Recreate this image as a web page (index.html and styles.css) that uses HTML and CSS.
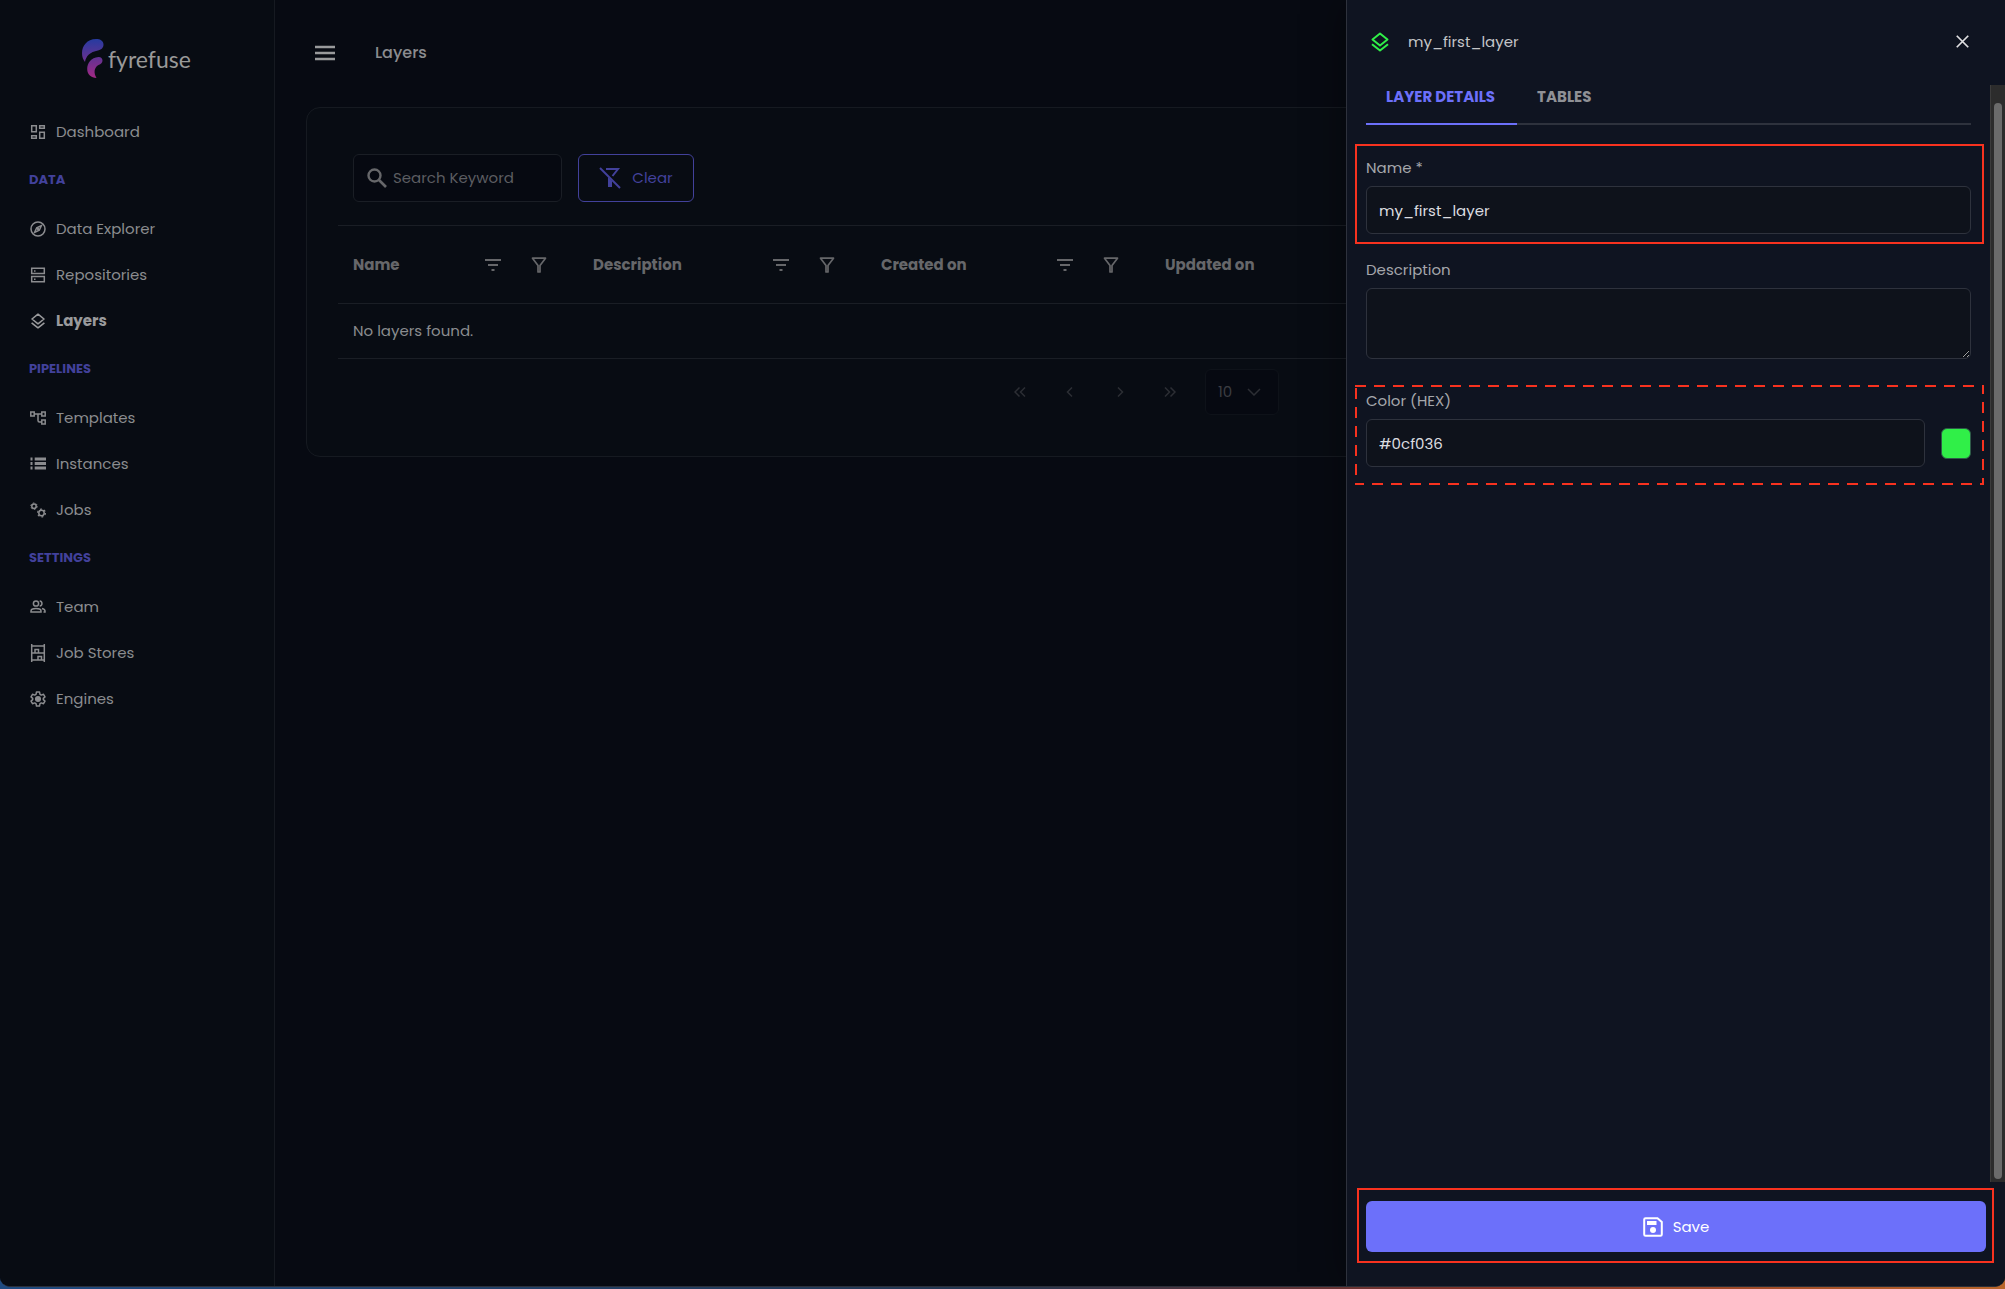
FILE: index.html
```html
<!DOCTYPE html>
<html lang="en">
<head>
    <meta charset="UTF-8">
    <meta name="viewport" content="width=device-width, initial-scale=1.0">
    <title>Layers - fyrefuse</title>
    <link rel="stylesheet" href="styles.css">
</head>
<body>

    <!-- Shared icons -->
    <svg class="sprite" aria-hidden="true">
        <symbol id="i-sort" viewBox="0 0 18 14">
            <path d="M1 2h16M4 7h10M7.500 12h3" fill="none" stroke="currentColor" stroke-width="2"/>
        </symbol>
        <symbol id="i-filter" viewBox="0 0 16 16">
            <path d="M1.500 1.200h13L9 8.500V15H7V8.500z" fill="none" stroke="currentColor" stroke-width="1.700" stroke-linejoin="round"/>
        </symbol>
        <symbol id="i-layers" viewBox="0 0 18 20">
            <path d="M9 1.500L16.500 7.500 9 13.500 1.500 7.500zM1 12.200L9 18.500 17 12.200" fill="none" stroke="currentColor" stroke-width="2" stroke-linejoin="round"/>
        </symbol>
    </svg>

    <div class="app">
        <aside class="sidebar">
            <a class="logo" href="#">
                <svg width="22" height="40" viewBox="0 0 22 40">
                    <defs>
                        <linearGradient id="flame" x1="0" y1="0" x2="0" y2="1">
                            <stop offset="0" stop-color="#263ba0"/>
                            <stop offset="1" stop-color="#a52883"/>
                        </linearGradient>
                    </defs>
                    <mask id="mark">
                        <path fill="#fff" d="M14 0C5 0 0 7 0 14c0 4 1 6.500 3 9 1-6 5-10 13-11.500 4-.800 5.500-3.500 5.500-6C21.500 2 18.500 0 14 0z"/>
                        <path fill="#fff" d="M16.500 18C9 18.500 5.200 24 5.200 30c0 5.500 4 9 9.300 9-3-5-2.500-10.500 2-13 2.500-1 4-2.500 4-4.500s-1.500-3.600-4-3.500z"/>
                    </mask>
                    <rect width="22" height="40" fill="url(#flame)" mask="url(#mark)"/>
                </svg>
                <span>fyrefuse</span>
            </a>

            <nav>
                <a href="#">
                    <svg width="16" height="16" viewBox="0 0 16 16"><path d="M1.700 1.700h4.600v6H1.700zM9.700 1.700h4.600v2.600H9.700zM9.700 8.300h4.600v6H9.700zM1.700 11.700h4.600v2.600H1.700z"/></svg>
                    Dashboard
                </a>
                <h2>DATA</h2>
                <a href="#">
                    <svg width="16" height="16" viewBox="0 0 16 16"><circle cx="8" cy="8" r="7"/><path d="M11.500 4.500L9.300 9.300 4.500 11.500 6.700 6.700z"/><circle cx="8" cy="8" r=".5"/></svg>
                    Data Explorer
                </a>
                <a href="#">
                    <svg width="16" height="16" viewBox="0 0 16 16"><path d="M1.700 1.200h12.600v5.300H1.700zM1.700 9.500h12.600v5.300H1.700zM4 4h1.500M4 12.200h1.500"/></svg>
                    Repositories
                </a>
                <a class="active" href="#">
                    <svg width="16" height="16" viewBox="0 0 18 20"><use href="#i-layers"/></svg>
                    Layers
                </a>
                <h2>PIPELINES</h2>
                <a href="#">
                    <svg width="16" height="16" viewBox="0 0 16 16"><path d="M.8 2h3.400v4H.800zM11.800 2h3.400v4h-3.400zM11.800 10h3.400v4h-3.400zM4.200 4h7.600M8 4v6.500q0 1.500 1.500 1.500h2.300"/></svg>
                    Templates
                </a>
                <a href="#">
                    <svg width="16" height="16" viewBox="0 0 16 16"><path stroke-width="2.800" d="M.5 3h2M.5 7.500h2M.5 12h2M4.700 3H16M4.700 7.500H16M4.700 12H16"/></svg>
                    Instances
                </a>
                <a href="#">
                    <svg width="16" height="16" viewBox="0 0 16 16"><circle cx="4" cy="4.200" r="2.200"/><circle cx="4" cy="4.200" r="3.200" stroke-width="1" stroke-dasharray="1.700 1.650"/><circle cx="11.500" cy="11" r="2.700"/><circle cx="11.500" cy="11" r="3.900" stroke-width="1.200" stroke-dasharray="2 2.080"/></svg>
                    Jobs
                </a>
                <h2>SETTINGS</h2>
                <a href="#">
                    <svg width="16" height="16" viewBox="0 0 16 16"><circle cx="6" cy="4.500" r="2.600"/><path d="M1 13v-1c0-1.500 2.500-2.500 5-2.500s5 1 5 2.500v1zM9.700 2c3 .300 3 4.700 0 5M12 9.500c2 .600 3 1.500 3 2.500v1h-1.500"/></svg>
                    Team
                </a>
                <a href="#">
                    <svg width="16" height="18" viewBox="0 0 16 18"><path d="M1.700 0v18M14.300 0v18M1.700 2h12.600M1.700 9h12.600M1.700 16h12.600M5 9V5.500h3.500V9M8 16v-3.500h3.500V16"/></svg>
                    Job Stores
                </a>
                <a href="#">
                    <svg width="16" height="16" viewBox="0 0 16 16"><path stroke-linejoin="round" d="M6.500 1h3l.5 2.300 1.300.8 2.200-.8 1.500 2.600L13.300 7.400v1.200l1.700 1.500-1.500 2.600-2.200-.8-1.300.8-.5 2.300h-3L6 12.700l-1.300-.8-2.200.8L1 10.100l1.700-1.500V7.400L1 5.900l1.500-2.600 2.200.8L6 3.300z"/><circle cx="8" cy="8" r="2.300" fill="currentColor"/></svg>
                    Engines
                </a>
            </nav>
        </aside>

        <main>
            <header class="topbar">
                <button class="menu-btn" aria-label="Menu">
                    <svg width="20" height="16" viewBox="0 0 20 16"><path d="M0 2h20M0 8h20M0 14h20" stroke="currentColor" stroke-width="2.500"/></svg>
                </button>
                <h1>Layers</h1>
            </header>

            <section class="card">
                <div class="toolbar">
                    <label class="search">
                        <svg width="20" height="20" viewBox="0 0 20 20"><circle cx="7.500" cy="7.500" r="6" fill="none" stroke="currentColor" stroke-width="2.400"/><path d="M12 12l7 7" stroke="currentColor" stroke-width="2.600"/></svg>
                        <input type="text" placeholder="Search Keyword" aria-label="Search Keyword">
                    </label>
                    <button class="clear-btn">
                        <svg width="22" height="22" viewBox="0 0 22 22"><path d="M7 2h12l-5.500 7" fill="none" stroke="currentColor" stroke-width="2"/><path d="M9 10l4 4v6H9z" fill="currentColor"/><path d="M1 1l20 20" stroke="currentColor" stroke-width="2"/></svg>
                        Clear
                    </button>
                </div>

                <table>
                    <colgroup>
                        <col class="col-name"><col class="col-desc"><col class="col-created"><col class="col-updated"><col>
                    </colgroup>
                    <thead>
                        <tr>
                            <th><div class="th"><span>Name</span><svg width="18" height="14"><use href="#i-sort"/></svg><svg width="16" height="16"><use href="#i-filter"/></svg></div></th>
                            <th><div class="th"><span>Description</span><svg width="18" height="14"><use href="#i-sort"/></svg><svg width="16" height="16"><use href="#i-filter"/></svg></div></th>
                            <th><div class="th"><span>Created on</span><svg width="18" height="14"><use href="#i-sort"/></svg><svg width="16" height="16"><use href="#i-filter"/></svg></div></th>
                            <th><div class="th"><span>Updated on</span><svg width="18" height="14"><use href="#i-sort"/></svg><svg width="16" height="16"><use href="#i-filter"/></svg></div></th>
                            <th></th>
                        </tr>
                    </thead>
                    <tbody>
                        <tr><td colspan="5">No layers found.</td></tr>
                    </tbody>
                </table>

                <div class="paginator">
                    <button aria-label="First page" disabled><svg width="12" height="10" viewBox="0 0 12 10"><path d="M5.500.5L1 5l4.500 4.500M11 .5L6.500 5 11 9.500"/></svg></button>
                    <button aria-label="Previous page" disabled><svg width="12" height="10" viewBox="0 0 12 10"><path d="M8 .5L3.500 5 8 9.500"/></svg></button>
                    <button aria-label="Next page" disabled><svg width="12" height="10" viewBox="0 0 12 10"><path d="M4 .5L8.500 5 4 9.500"/></svg></button>
                    <button aria-label="Last page" disabled><svg width="12" height="10" viewBox="0 0 12 10"><path d="M1 .5L5.500 5 1 9.500M6.500.5L11 5 6.500 9.500"/></svg></button>
                    <div class="rows">
                        <select aria-label="Rows per page" disabled>
                            <option>10</option>
                        </select>
                        <svg width="14" height="8" viewBox="0 0 14 8"><path d="M1 1l6 6 6-6"/></svg>
                    </div>
                </div>
            </section>
        </main>

        <!-- Layer drawer -->
        <aside class="drawer">
            <header class="drawer-header">
                <svg class="layer-icon" width="18" height="20"><use href="#i-layers"/></svg>
                <span>my_first_layer</span>
                <button class="close-btn" aria-label="Close">
                    <svg width="13" height="13" viewBox="0 0 12 12"><path d="M.7.7l10.600 10.600M11.300.7L.7 11.300" stroke="currentColor" stroke-width="1.600"/></svg>
                </button>
            </header>

            <div class="drawer-body">
                <div class="drawer-content">
                    <div class="tabs" role="tablist">
                        <button class="tab selected" role="tab" aria-selected="true">LAYER DETAILS</button>
                        <button class="tab" role="tab" aria-selected="false">TABLES</button>
                    </div>

                    <form>
                        <div class="field marked">
                            <label for="name">Name *</label>
                            <input type="text" id="name" value="my_first_layer">
                        </div>
                        <div class="field">
                            <label for="description">Description</label>
                            <textarea id="description"></textarea>
                        </div>
                        <div class="field">
                            <label for="color">Color (HEX)</label>
                            <div class="color-row">
                                <input type="text" id="color" value="#0cf036">
                                <button type="button" class="swatch" aria-label="Pick color"></button>
                            </div>
                            <svg class="dashes"><rect width="100%" height="100%"/></svg>
                        </div>
                    </form>
                </div>
                <div class="scrollbar"><div class="thumb"></div></div>
            </div>

            <footer class="drawer-footer">
                <button class="save-btn">
                    <svg width="20" height="20" viewBox="0 0 20 20"><path d="M2.500 1.200h12L18.800 5v12.500q0 1.300-1.300 1.300h-15q-1.300 0-1.300-1.300v-15q0-1.300 1.300-1.300z" fill="none" stroke="currentColor" stroke-width="2"/><path d="M4 4h9.500v4H4z" fill="currentColor"/><circle cx="10" cy="13" r="3" fill="currentColor"/></svg>
                    Save
                </button>
            </footer>
        </aside>
    </div>

</body>
</html>
```

FILE: styles.css
```css
* {
    box-sizing: border-box;
}

html {
    background: linear-gradient(90deg, #1f4a80 0%, #24364f 50%, #8a3226 75%, #b9652b 100%);
}

body {
    margin: 0;
    color: #8b8c8f;
    font-family: Poppins, Inter, "Open Sans", sans-serif;
    font-size: 15px;
    line-height: 24px;
}

button,
input,
textarea,
select {
    font: inherit;
    color: inherit;
}

button {
    padding: 0;
    border: none;
    background: none;
    cursor: pointer;
}

a {
    color: inherit;
    text-decoration: none;
}

svg {
    flex: none;
}

.sprite {
    display: none;
}

.app {
    position: relative;
    display: flex;
    height: calc(100vh - 2px);
    background-color: #070a12;
    border-bottom: 1px solid #2b2f38;
    border-radius: 0 0 10px 10px;
    overflow: hidden;
}

/* Sidebar */
.sidebar {
    flex: none;
    width: 275px;
    background-color: #080c13;
    border-right: 1px solid #161a21;
}

.logo {
    display: flex;
    align-items: center;
    gap: 4px;
    height: 109px;
    padding: 8px 0 0 82px;
    color: #999;
    font-family: Lato, sans-serif;
    font-size: 23px;
}

.sidebar nav a {
    display: flex;
    align-items: center;
    gap: 10px;
    height: 46px;
    padding-left: 30px;
}

.sidebar nav svg {
    width: 16px;
    fill: none;
    stroke: currentColor;
    stroke-width: 1.5;
}

.sidebar nav .active {
    color: #999a9c;
    font-weight: 700;
}

.sidebar h2 {
    height: 51px;
    margin: 0;
    padding: 13px 0 0 29px;
    color: #42419b;
    font-size: 13px;
    font-weight: 700;
}

/* Main */
main {
    flex: 1;
    min-width: 0;
    padding: 0 32px 0 31px;
}

.topbar {
    display: flex;
    align-items: center;
    gap: 40px;
    height: 107px;
    padding: 0 0 2px 9px;
}

.menu-btn {
    display: flex;
    color: #999a9c;
}

.topbar h1 {
    margin: 0;
    font-size: 16px;
    font-weight: 500;
}

.card {
    padding: 46px 31px 41px;
    background-color: #080c13;
    border: 1px solid #161a21;
    border-radius: 14px;
}

.toolbar {
    display: flex;
    gap: 16px;
    padding: 0 15px 23px;
}

.search {
    display: flex;
    align-items: center;
    gap: 6px;
    width: 209px;
    height: 48px;
    padding: 0 13px;
    background-color: #060911;
    border: 1px solid #1a1e25;
    border-radius: 6px;
    color: #66676a;
}

.search input {
    width: 100%;
    min-width: 0;
    padding: 0;
    border: none;
    background: none;
}

.search input::placeholder {
    color: #5c5d61;
}

.clear-btn {
    display: flex;
    align-items: center;
    justify-content: center;
    gap: 11px;
    width: 116px;
    height: 48px;
    border: 1px solid #42419b;
    border-radius: 6px;
    color: #42419b;
}

table {
    width: 100%;
    table-layout: fixed;
    border-collapse: collapse;
}

.col-name {
    width: 240px;
}

.col-desc {
    width: 288px;
}

.col-created {
    width: 284px;
}

.col-updated {
    width: 289px;
}

th,
td {
    padding: 0 15px;
    border: 1px solid #1a1e25;
    border-width: 1px 0;
    text-align: left;
}

th {
    height: 78px;
    color: #66676a;
    font-weight: 700;
}

td {
    height: 55px;
}

.th {
    display: flex;
    align-items: center;
    gap: 29px;
    padding-right: 16px;
}

.th span {
    flex: 1;
}

.paginator {
    display: flex;
    justify-content: center;
    padding: 10px 5px 0 0;
    color: #2c2e34;
}

.paginator button {
    display: flex;
    align-items: center;
    justify-content: center;
    width: 50px;
    height: 46px;
}

.paginator svg {
    fill: none;
    stroke: currentColor;
    stroke-width: 1.5;
}

.rows {
    display: flex;
    align-items: center;
    width: 74px;
    height: 46px;
    margin-left: 10px;
    padding: 0 17px 0 12px;
    background-color: #060911;
    border: 1px solid #0e1219;
    border-radius: 6px;
}

.rows select {
    flex: 1;
    width: 0;
    padding: 0;
    border: none;
    background: none;
    appearance: none;
    opacity: 1;
    color: #3b3d42;
}

/* Drawer */
.drawer {
    position: absolute;
    top: 0;
    right: 0;
    bottom: 0;
    display: flex;
    flex-direction: column;
    width: 659px;
    background-color: #0f1421;
    border-left: 1px solid #2e323d;
    box-shadow: 0 0 40px rgba(0, 0, 0, 0.4);
    color: #a5a7ac;
}

.drawer-header {
    display: flex;
    align-items: center;
    gap: 19px;
    height: 85px;
    padding: 0 36px 2px 24px;
    color: #c4c5c8;
}

.drawer-header span {
    flex: 1;
}

.layer-icon {
    color: #30ef48;
}

.close-btn {
    display: flex;
    color: #e0e0e2;
}

.drawer-body {
    display: flex;
    flex: 1;
    min-height: 0;
}

.drawer-content {
    flex: 1;
    padding: 0 19px;
}

.tabs {
    display: flex;
    height: 40px;
    border-bottom: 2px solid #2e323d;
}

.tab {
    height: 40px;
    padding: 0 22px 15px 20px;
    border-bottom: 2px solid transparent;
    font-weight: 700;
    color: #8f9196;
}

.tab.selected {
    border-color: #6c70fa;
    color: #6c70fa;
}

form {
    display: flex;
    flex-direction: column;
    gap: 24px;
    padding-top: 31px;
}

.field {
    position: relative;
    display: flex;
    flex-direction: column;
    gap: 6px;
}

.field input,
.field textarea {
    width: 100%;
    height: 48px;
    padding: 0 12px;
    background-color: #0e121b;
    border: 1px solid #2e323d;
    border-radius: 6px;
    color: #dcdde0;
}

.field textarea {
    height: 71px;
    padding: 11px 12px;
}

.field:last-child {
    margin-top: 6px;
}

.color-row {
    display: flex;
    align-items: center;
    gap: 16px;
}

.swatch {
    flex: none;
    width: 30px;
    height: 31px;
    background-color: #30ef48;
    border: 1px solid #2e5a48;
    border-radius: 6px;
}

.scrollbar {
    width: 15px;
    padding: 18px 3px 3px;
    background-color: #2c2c2c;
    border-left: 1px solid #3c3c3c;
}

.thumb {
    width: 8px;
    height: 100%;
    border-radius: 4px;
    background-color: #6b6b6b;
}

.drawer-footer {
    position: relative;
    padding: 19px 19px 34px;
}

.save-btn {
    display: flex;
    align-items: center;
    justify-content: center;
    gap: 10px;
    width: 100%;
    height: 51px;
    background-color: #6c70fa;
    border-radius: 6px;
    color: #fff;
}

/* Red callout frames */
.marked::after,
.drawer-footer::after {
    content: "";
    position: absolute;
    inset: -12px -13px -10px -11px;
    border: 2px solid #f8321f;
    pointer-events: none;
}

.drawer-footer::after {
    inset: 6px 11px 23px 10px;
}

.dashes {
    position: absolute;
    top: -4px;
    left: -11px;
    width: calc(100% + 24px);
    height: calc(100% + 22px);
    fill: none;
    stroke: #f8321f;
    stroke-width: 4;
    stroke-dasharray: 11 8;
    pointer-events: none;
}
```
